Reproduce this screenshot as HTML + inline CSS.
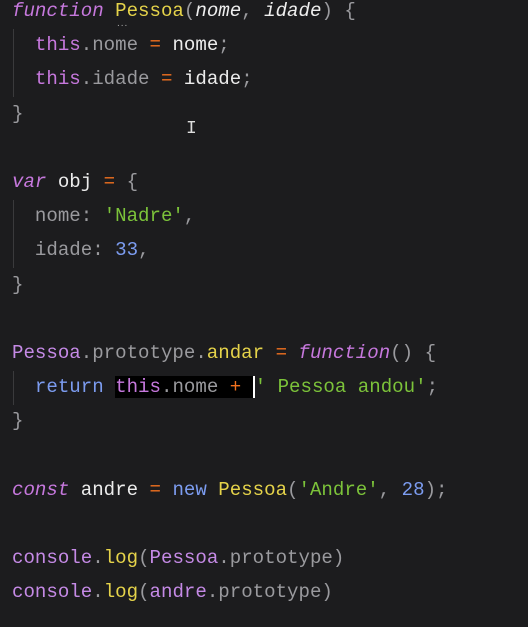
<!DOCTYPE html>
<html><head><meta charset="utf-8"><style>
html,body{margin:0;padding:0;background:#1c1c1e;width:528px;height:627px;overflow:hidden}
pre{margin:0;position:absolute;left:12px;top:-6px;font-family:"Liberation Mono",monospace;font-size:19.1px;line-height:34.2px;color:#ececec;white-space:pre}
.k{color:#c678dd;font-style:italic}
.kw{color:#c678dd}
.f{color:#e5d34a}
.p{color:#eeeeee;font-style:italic}
.g{color:#9a9a9e}
.o{color:#f0701e}
.s{color:#7cc33a}
.n{color:#7c9cf0}
.r{color:#7c9cf0}
.pu{color:#c58ae6}
.hl{background:#000}
.cur{border-left:2px solid #fff}
.guide{position:absolute;left:13px;width:1px;background:#3a3a3c}
</style></head><body>
<div class="guide" style="top:29px;height:68px"></div>
<div class="guide" style="top:200px;height:68px"></div>
<div class="guide" style="top:371px;height:34px"></div>
<pre><span class="k">function</span> <span class="f">Pessoa</span><span class="g">(</span><span class="p">nome</span><span class="g">,</span> <span class="p">idade</span><span class="g">)</span> <span class="g">{</span>
  <span class="kw">this</span><span class="g">.nome</span> <span class="o">=</span> nome<span class="g">;</span>
  <span class="kw">this</span><span class="g">.idade</span> <span class="o">=</span> idade<span class="g">;</span>
<span class="g">}</span>

<span class="k">var</span> obj <span class="o">=</span> <span class="g">{</span>
  <span class="g">nome:</span> <span class="s">'Nadre'</span><span class="g">,</span>
  <span class="g">idade:</span> <span class="n">33</span><span class="g">,</span>
<span class="g">}</span>

<span class="pu">Pessoa</span><span class="g">.prototype.</span><span class="f">andar</span> <span class="o">=</span> <span class="k">function</span><span class="g">()</span> <span class="g">{</span>
  <span class="r">return</span> <span class="hl"><span class="kw">this</span><span class="g">.nome</span> <span class="o">+</span> </span><span class="cur"></span><span class="s">' Pessoa andou'</span><span class="g">;</span>
<span class="g">}</span>

<span class="k">const</span> andre <span class="o">=</span> <span class="r">new</span> <span class="f">Pessoa</span><span class="g">(</span><span class="s">'Andre'</span><span class="g">,</span> <span class="n">28</span><span class="g">);</span>

<span class="pu">console</span><span class="g">.</span><span class="f">log</span><span class="g">(</span><span class="pu">Pessoa</span><span class="g">.prototype)</span>
<span class="pu">console</span><span class="g">.</span><span class="f">log</span><span class="g">(</span><span class="pu">andre</span><span class="g">.prototype)</span></pre>
<div style="position:absolute;left:186px;top:119px;color:#ddd;font:18px 'Liberation Mono',monospace">I</div>
<div style="position:absolute;left:117px;top:18px;color:#aaa;font:10px 'Liberation Sans',sans-serif;letter-spacing:1px">...</div>
</body></html>
